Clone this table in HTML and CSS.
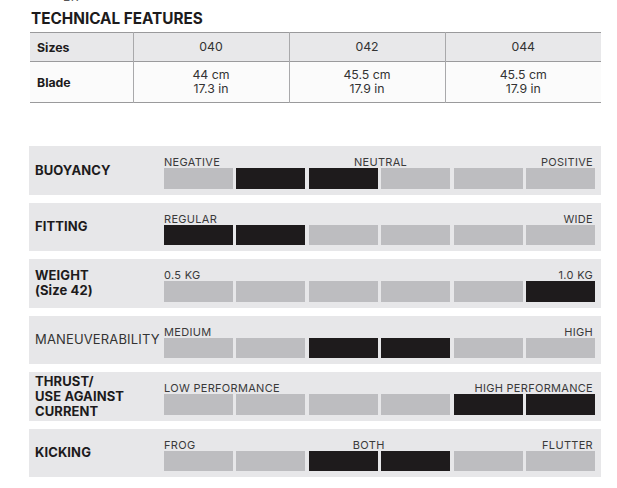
FILE: index.html
```html
<!DOCTYPE html>
<html>
<head>
<meta charset="utf-8">
<link rel="stylesheet" href="styles.css">
</head>
<body>
<div class="page">
  <div class="cut">BR</div>
  <h2 class="title">TECHNICAL FEATURES</h2>
  <table class="specs">
    <colgroup><col class="c0"><col class="c1"><col class="c1"><col class="c1"></colgroup>
    <tr class="head"><th>Sizes</th><td>040</td><td>042</td><td>044</td></tr>
    <tr class="body"><th>Blade</th><td>44 cm<br>17.3 in</td><td>45.5 cm<br>17.9 in</td><td>45.5 cm<br>17.9 in</td></tr>
  </table>

  <div class="features">
    <div class="panel">
      <div class="label">BUOYANCY</div>
      <div class="meter">
        <div class="scale"><span>NEGATIVE</span><span>NEUTRAL</span><span>POSITIVE</span></div>
        <div class="bars"><i></i><i class="on"></i><i class="on"></i><i></i><i></i><i></i></div>
      </div>
    </div>
    <div class="panel">
      <div class="label">FITTING</div>
      <div class="meter">
        <div class="scale"><span>REGULAR</span><span>WIDE</span></div>
        <div class="bars"><i class="on"></i><i class="on"></i><i></i><i></i><i></i><i></i></div>
      </div>
    </div>
    <div class="panel">
      <div class="label">WEIGHT<br>(Size 42)</div>
      <div class="meter">
        <div class="scale"><span>0.5 KG</span><span>1.0 KG</span></div>
        <div class="bars"><i></i><i></i><i></i><i></i><i></i><i class="on"></i></div>
      </div>
    </div>
    <div class="panel">
      <div class="label light">MANEUVERABILITY</div>
      <div class="meter">
        <div class="scale"><span>MEDIUM</span><span>HIGH</span></div>
        <div class="bars"><i></i><i></i><i class="on"></i><i class="on"></i><i></i><i></i></div>
      </div>
    </div>
    <div class="panel">
      <div class="label">THRUST/<br>USE AGAINST<br>CURRENT</div>
      <div class="meter">
        <div class="scale"><span>LOW PERFORMANCE</span><span>HIGH PERFORMANCE</span></div>
        <div class="bars"><i></i><i></i><i></i><i></i><i class="on"></i><i class="on"></i></div>
      </div>
    </div>
    <div class="panel">
      <div class="label">KICKING</div>
      <div class="meter">
        <div class="scale"><span>FROG</span><span>BOTH</span><span>FLUTTER</span></div>
        <div class="bars"><i></i><i></i><i class="on"></i><i class="on"></i><i></i><i></i></div>
      </div>
    </div>
  </div>
</div>
</body>
</html>
```
FILE: styles.css
```css
* { box-sizing: border-box; }
html, body { margin: 0; padding: 0; background: #ffffff; }
body {
  font-family: Inter, "Noto Sans", "Liberation Sans", sans-serif;
  color: #1d1b1c;
}
.page {
  padding-left: 29px;
  width: 601px;
}
.cut {
  margin-top: -10px;
  margin-left: 34px;
  font-size: 12px;
  line-height: 14px;
  color: #555;
  height: 14px;
}
.title {
  margin: 6px 0 4px 2px;
  font-size: 15.3px;
  font-weight: 700;
  line-height: 18px;
  height: 18px;
  color: #1d1b1c;
}
.specs {
  margin-left: 1px;
  width: 570px;
  border-collapse: collapse;
  table-layout: fixed;
  font-size: 12px;
  color: #333;
}
.specs .c0 { width: 103px; }
.specs .c1 { width: 156px; }
.specs th {
  text-align: left;
  font-weight: 700;
  padding: 0 0 0 7px;
  color: #1d1b1c;
  font-size: 12.3px;
}
.specs td {
  text-align: center;
  border-left: 1px solid #a9a9ab;
  padding: 0;
  line-height: 14.5px;
  font-size: 12.3px;
}
.specs tr { border-top: 1px solid #9a9a9c; border-bottom: 1px solid #9a9a9c; }
.specs .head { background: #e8e8ea; height: 29px; }
.specs .body { background: #fbfbfb; height: 41px; }

.features {
  margin-top: 43px;
  display: flex;
  flex-direction: column;
  gap: 8px;
}
.panel {
  height: 48.5px;
  background: #e7e7e9;
  display: flex;
  align-items: center;
  padding-left: 6px;
}
.label {
  width: 129px;
  flex: none;
  font-size: 13px;
  font-weight: 700;
  line-height: 14.8px;
  color: #1d1b1c;
  letter-spacing: 0.1px;
}
.label.light { font-weight: 400; color: #333; letter-spacing: 0.15px; }
.meter {
  width: 431px;
  align-self: stretch;
  padding-top: 10px;
}
.scale {
  display: flex;
  justify-content: space-between;
  font-size: 11px;
  line-height: 12px;
  color: #3a3a3a;
  letter-spacing: 0.3px;
  padding-right: 2px;
}
.bars {
  display: grid;
  grid-template-columns: repeat(6, 1fr);
  gap: 3.3px;
  height: 20.5px;
}
.bars i { background: #bdbdc0; }
.bars i.on { background: #1e1b1c; }
```
